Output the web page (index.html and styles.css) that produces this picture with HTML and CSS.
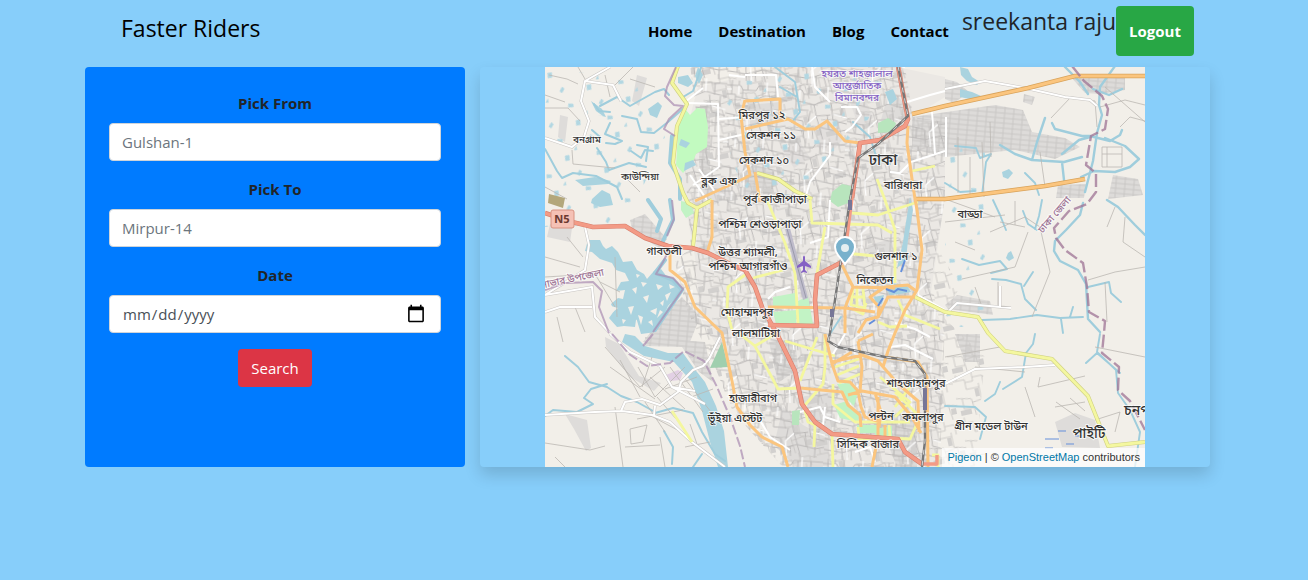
FILE: index.html
```html
<!DOCTYPE html>
<html lang="en">
<head>
<meta charset="utf-8">
<title>Faster Riders</title>
<link rel="stylesheet" href="styles.css">
</head>
<body>
<div class="container">
  <header class="navbar">
    <a class="brand" href="#">Faster Riders</a>
    <nav class="nav">
      <a class="nav-link" href="#">Home</a>
      <a class="nav-link" href="#">Destination</a>
      <a class="nav-link" href="#">Blog</a>
      <a class="nav-link" href="#">Contact</a>
      <span class="user">sreekanta raju</span>
      <button class="logout" type="button">Logout</button>
    </nav>
  </header>
  <main class="content">
    <form class="search-card">
      <div class="field"><label for="from">Pick From</label><input id="from" type="text" placeholder="Gulshan-1"></div>
      <div class="field"><label for="to">Pick To</label><input id="to" type="text" placeholder="Mirpur-14"></div>
      <div class="field"><label for="date">Date</label><input id="date" type="date"></div>
      <button class="search" type="button">Search</button>
    </form>
    <section class="map-card">
      <div class="map">
        <svg class="map-svg" viewBox="0 0 600 400" role="img" aria-label="Map of Dhaka">
          <defs>
            <pattern id="streets" width="61" height="53" patternUnits="userSpaceOnUse" patternTransform="rotate(4)">
              <path d="M0 5H14L16 9H29L32 4H61M0 14H9V25H22M9 16L27 19 30 30 44 28M5 0V14M16 9V17M21 0V9M12 5V0M27 19L40 13 61 17M36 4V14M49 4V16M44 16L47 33 61 36M0 33L17 36 19 53M0 44L18 46 34 41 38 53M30 30L34 41 52 44 61 42M52 35V53M9 34V45M24 25L22 38M41 28L43 42M27 43L28 53M55 17V27H47" fill="none" stroke="#b9b7b5" stroke-width=".9"/>
              <path d="M0 9H5M12 5V14M30 30L22 38 24 53M40 13V0M47 27L61 30" fill="none" stroke="#fff" stroke-width="1.2"/>
            </pattern>
            <pattern id="alleys" width="37" height="43" patternUnits="userSpaceOnUse" patternTransform="rotate(-12)">
              <path d="M0 6H12V16H25M4 6V0M12 9H20V0M25 12V27L37 30M0 23L15 26 17 43M15 30L28 28M6 24V35H16M28 28L30 43M30 6L37 8M20 5H30V15" fill="none" stroke="#c6c4c2" stroke-width=".8"/>
              <path d="M2 36h11v5H2zM20 17h4v8h-4zM30 32h5v6h-5z" fill="#d2d0ce"/>
            </pattern>
            <pattern id="dense" width="9" height="5" patternUnits="userSpaceOnUse" patternTransform="rotate(5)">
              <rect width="9" height="5" fill="#dddbd9"/><path d="M0 1H9M3 0V5" stroke="#cac8c6" stroke-width="1"/>
            </pattern>
            <pattern id="ponds" width="41" height="37" patternUnits="userSpaceOnUse" patternTransform="rotate(17)">
              <path d="M4 5l4-2 2 5-4 2zM22 14l3 1-1 5-3-1zM33 28l5-1 1 3-5 2zM12 29l2 4-3 1z" fill="#b2d7e2"/>
            </pattern>
          </defs>
          <rect width="600" height="400" fill="#f2efe9"/>

          <g fill="#dedcda">
            <path d="M153 20L197 10 240 0H352L400 10V30L368 50 400 60V130L385 232 398 260 392 400H245L190 310 155 250 150 190 132 96 145 50Z" fill="#ebe8e4"/>
            <path d="M15 48L23 50 20 75 13 70Z"/><path d="M5 157L27 161 25 175 2 170Z"/>
            <path d="M205 38L235 35 240 52 205 60Z"/><path d="M345 20L362 40 352 55 336 53Z"/>
            <path d="M92 8l10 3-8 28-7-5zM510 355l20-9 20 7 5 28-38-1z"/>
            <path d="M20 347l22 6 4 28-5 3-12-22zM60 270l14 7 20 32 22 7-7 8-24-14-24-30z"/>
            <path d="M255 330l32-5v45l-20-4zM238 340l20 18 26 14v28h-33l-22-22zM323 178l20-5 6 10-8 8-20-5z"/>
            <path d="M270 60l12-6 16 18-12 14-14-6zM305 35l15-4 8 20-14 10zM156 120l25-10 6 18-22 12zM235 80l20-5 10 16-16 10z" opacity=".7"/>
          </g>
          <path fill="url(#dense)" d="M367 50L450 38 478 43 487 65 520 71 535 80 510 92 470 83 400 90 367 82ZM525 9H580V23L555 27 540 26ZM400 12l12 3 12 10-15 11-9-4ZM479 27l11 3-3 8-9-3ZM155 38l10-5v90l-11-25ZM200 95l28 8 5 15-35 13ZM85 153l15-6 22 25-7 10-28-20ZM115 250L137 230 155 250 145 275 98 275 105 266ZM100 270l60 5 8 40-14-10-17-25-37-1ZM400 238l12-10 33 6 3 14-45-6ZM513 118l28-1-2 14h-28ZM568 108l25 4 5 16-35 4ZM410 267h25v28h-15ZM312 350l60-5v55h-20l-8-20-32-6ZM224 275l26-3 3 30-20 14Z"/>
          <path fill="url(#alleys)" d="M145 0H360L368 50 400 55V132L392 180 415 220 398 250 440 290 430 400H238L188 345 170 300 142 243 130 195 146 180 140 100 152 50Z"/>
          <path fill="url(#streets)" d="M145 0H360L368 50 400 55V132L385 220 400 250 395 400H238L188 345 170 300 142 243 130 195 146 180 140 100 152 50Z"/>
          <path fill="url(#ponds)" d="M195 5H350L310 75 260 130 200 130 170 40ZM0 5H90L120 70 80 160H0ZM400 80H440V260H400Z"/>

          <g fill="#b8e5bd">
            <path fill="#c2fac0" d="M134 50L141 43 145 48 152 41 160 42 163 60 162 80 151 87 148 95 138 106 131 98Z"/><path d="M333 56l10-5 8 5-3 9-15 1zM287 125l10-8 9 2 2 15-15 6-8-6z"/>
            <path d="M136 134l10 2 3 10-8 5-5-8zM228 230l22-4 2 14-24 2zM253 234l10-5 5 28-16 1zM228 245l24-2-1 13-20 1z" fill="#c2f3c5"/>
            <path fill="#a0cfae" d="M177 275l6 25-18 1z"/><path d="M292 317l12-1 9 9-4 14-10-10zM289 338l13-4 13 15-3 6-17-4zM312 358h20v8h-19zM330 362l17-3v11l-17-2z" fill="#c0f2c4"/><path d="M247 344l8-1-1 15h-7z"/>
            <path fill="#b3a77b" d="M4 127l16 4-2 10-15-5z"/><path fill="#e2d0e4" d="M121 308l12-5 5 3-3 7-10 1z"/>
          </g>

          <g fill="#aad3df">
            <path d="M43 173l12 0 3 6 3 3 6-3 6 6 5 10 9-1 5 9 7 4 3 5 7-8 7-2 6 8 11 5 2 5-9 2-3 10-5 1-3 9-5 2-2 7-8 7-5-7-4 2-1 7-11-1-7 1-8-9 5-7-3-7 7-6 5 1 2-9-9 1 5-9 8-1-4-8-9-3-4-7-12-4-8-7-7-1z"/>
            <path d="M110 207l18 4 10 11-15 17-12 26-15 2-6-20 11-24z"/>
            <path d="M103 42l10-7 4 4-5 12-7-3zM133 10l10-2 5 8-5 4-10-4zM47 132l10-9 8 4 3 11-13 2-9-4zM30 113l20-3 16 4-3 3-25 2zM136 72l9 4-4 5-7-3zM140 96l8-3 3 5-12 6zM46 34l5 10 7 5-5-1 8 2-4-8zM153 0l5 8-4 9-4-8z"/>
            <path d="M415 22l12 3 9 4-7 4-14-3zM415 0l8 2 4 8 8 5-3 3-10-4-6-6zM329 230l10-2-2 9-7-2zM341 222l6-6 15 3 4 6-11 2-10 1zM365 130l-4 25-3 20-6 26 9-8 2-20 5-30zM340 25l8-3 4 10-7 6zM463 186l3-2 3 7-5 3-3-3zM457 105l7-3 4 4-5 6-5-2z"/>
            <path d="M80 267l10 2 10 10 23 7 15 0 10 14 12 15 11 24 8 25 4 36h-10l-8-25-8-31-10-29-18-20-30-6-22-14z"/>
          </g>
          <path d="M111 217l7 2-5 4zM98 230l6-2-2 8zM120 228l6-3-4 9zM105 244l7-3-1 7zM83 240l6-1-3 9zM72 207l7-1-3 6zM93 248l5 2-2 8zM112 251l3-8 3 2zM66 239l7 2-5 4zM124 217l6 3-5 2zM96 215l6 1-4 4zM87 222l5-2-1 7zM115 236l4-3-1 6zM103 255l4-2 1 6zM77 252l4 1-3 4zM91 207l4 1-3 3z" fill="#f2efe9"/>
          <g fill="none" stroke="#9fcddc" stroke-linecap="round" stroke-linejoin="round">
            <path stroke-width="4" d="M127 69L125 96 135 112V132M103 133L116 152 112 164M125 133L128 153 117 176M120 193L110 206 128 213 137 223 110 263"/>
            <path stroke-width="2" d="M55 39L72 30 85 39 110 25 119 22 124 28M0 82L12 104 17 111 28 106 51 109 72 120 77 132M52 81L61 95 64 103 84 96 101 100M77 49L92 52 96 65 109 66 123 55 140 40M65 45L54 44 49 37M61 76L70 77 77 74 60 67 65 56M55 70L47 63M86 84L96 91 100 83 108 84M92 78L103 80 101 94M20 289L33 300 44 315 62 320 76 329 92 335 110 345M0 349L8 343 32 345 48 337 39 331 46 322 62 317M110 346L128 341 148 346 157 365 170 387 180 394M148 400L157 387M119 364L128 380 127 397M156 0L153 10 148 24 138 30"/>
            <path stroke-width="2.4" d="M455 78L470 87 487 93 519 95 537 90M487 93L492 75 500 51M507 56L510 62 537 69 545 69M570 -1L555 20 554 38 557 48 552 66 548 94 540 125M545 69L565 74 575 68 577 63M560 71L580 79 594 92 585 100 570 105 549 104 536 110M517 95L519 113M517 87L534 73 545 70M520 0L535 15 543 27M548 22L564 28 577 22M562 133L573 140 590 158 600 168M538 136L535 148 521 163 510 174 509 184 515 194 533 203 541 217 543 252 555 265"/>
            <path stroke-width="1.9" d="M448 133L455 148 461 163M478 144L483 157 492 163M497 133L494 149 490 162M417 192L434 198 455 194 462 202 446 206M447 212L461 213 476 217 480 232 491 243M479 219L488 205M543 220L564 215 566 226 576 235M437 253L465 252 492 248 515 251 538 250M528 240L525 250M516 252L518 266M410 79L431 81 435 91 446 87 441 95 437 128M480 106L490 116 494 128M400 116L415 125 430 124M555 267L552 285 571 303 573 326 585 343 595 365 590 400M400 339L430 340 441 350 435 372M455 315L450 327 440 334M490 267L488 277 481 286 477 310 458 322M541 296L552 286 575 306M230 0L250 15 255 45 247 55M235 20L252 30M285 267L296 250M308 55L325 70 332 92 345 97"/>
          </g>
          <g fill="none" stroke="#bbb7b3" stroke-width=".8">
            <path d="M4 8L22 12 33 17M0 28L20 35M33 0L40 12M68 20L88 0M27 83L28 97 70 101M0 41H23L35 54M0 210L50 207 70 240M0 376L45 383 60 379M70 340L78 400M85 362L102 358 98 375 86 377ZM93 345L108 350 140 367M145 357L153 380M93 300L110 330 140 300M105 310L140 342M120 322L152 310M60 280L95 320 120 300M92 352L138 343M107 290L97 320M125 300L158 345M65 300L110 332M75 293L95 330M445 55L446 90M413 70V126M425 90V130M437 75L439 130M495 85L500 120M506 51L526 30 550 34 552 60M555 40L580 33 600 38M575 60L585 50 600 54M557 80H577V100H557ZM562 80V100M557 87H577M445 165L480 150 495 160 505 205 487 250M483 165L470 200 417 212M453 215V240M430 220L437 240M410 175L430 183M470 134V158M455 155L480 160M400 132L450 150M400 155L460 148M543 213L570 205 600 200M560 215L562 255M550 280L600 290M480 320L490 350M493 320L540 309M495 310L493 320M400 290L455 280M430 300L480 305M510 340L540 335M511 335L535 352M525 331L540 344M550 353L575 345 570 365M410 390L440 387M580 150L578 175 600 190M562 160L570 140M560 20L600 55"/>
            <path d="M22 170L38 190M0 190L35 200M70 190L72 250M30 240L40 265M12 250L18 275M55 215L75 225M0 120L22 132M80 110L95 125M10 390L20 400M115 370L120 400M140 380L165 375M80 380L115 378M100 335L120 365M112 330L138 360M140 312L170 350M146 330L168 322M85 12L110 20M60 8L65 30"/>
          </g>
          <path fill="none" stroke="#c9c6c3" stroke-width="3" d="M65 0L40 14 36 34 44 54 39 70 27 80 0 71M40 14L68 18 76 34M40 160L44 178 40 203 0 228M0 228L47 220 50 250 65 266M0 245L15 240 47 240M65 267L85 285 115 299 127 320 160 337M0 348L33 346 50 345 77 344 107 348 125 355 147 375 180 400M76 344L80 335 97 332 115 338 133 325 136 315 148 303 158 299 164 292 175 270M109 348L110 339M127 320L150 324M400 22L440 14 480 21 520 30 545 33 552 39M400 248L412 236 466 241M455 219V240M400 317L430 302 480 300 510 298"/>
          <path fill="none" stroke="#fff" stroke-width="2" stroke-linejoin="round" d="M65 0L40 14 36 34 44 54 39 70 27 80 0 71M40 14L68 18 76 34M40 160L44 178 40 203 0 228M0 228L47 220 50 250 65 266M0 245L15 240 47 240M65 267L85 285 115 299 127 320 160 337M0 348L33 346 50 345 77 344 107 348 125 355 147 375 180 400M76 344L80 335 97 332 115 338 133 325 136 315 148 303 158 299 164 292 175 270M109 348L110 339M127 320L150 324M400 22L440 14 480 21 520 30 545 33 552 39M400 248L412 236 466 241M455 219V240M400 317L430 302 480 300 510 298M140 35L158 21M143 36L173 37 174 100M174 52L200 50M174 73L200 67M174 100L148 118M154 102L170 125M145 108L162 133M184 8L200 10M233 30L231 8 200 8M267 0L270 20 285 35M296 40L312 40 316 48 307 60 300 65M285 75L285 88 265 115 260 132M362 35L385 28 400 24M387 45L390 87M401 50V90M345 105L355 106 366 95 400 84M285 133L283 170 265 176M223 232L230 225 245 220M373 228L400 243M350 256L370 262 385 270M300 267L285 292M345 280L360 278 388 292M255 345L275 340 280 350 295 355M280 340L278 358M213 350L225 370 245 383M310 385L325 380 330 395"/>

          <g fill="none" stroke-linejoin="round">
            <path stroke="#cfd082" stroke-width="4" d="M133 -1L127 16 142 37 132 59 128 96 138 126 143 136 152 141 148 180M152 141L167 133M212 106L233 112 250 124 267 132M370 230L400 245 433 250 443 266 460 284 507 292 543 329 563 379 600 375"/>
            <path stroke="#f4f79f" stroke-width="2.8" d="M133 -1L127 16 142 37 132 59 128 96 138 126 143 136 152 141 148 180M152 141L167 133M212 106L233 112 250 124 267 132M265 133L267 156 333 158 347 166M222 133L240 176 250 206 253 256M307 146L333 148 373 135M340 133L350 163V216M280 160L272 206M300 186L330 189M332 112L340 133M370 230L400 245 433 250 443 266 460 284 507 292 543 329 563 379 600 375M200 208L183 220 182 243 187 263M208 211L238 203M367 104L390 99M210 279L233 322 255 321M195 267L210 279 230 267M272 270L255 314M240 274L290 289M280 267V300L278 317 260 338M290 300L314 292M292 308L314 299M294 316L315 307M288 317V337L310 355H365M260 344L263 355 270 358 269 380M287 367L288 400M308 222L306 238 320 241 318 222M312 221V238M307 230H320M308 242L318 247 321 236M353 233L360 248 395 262M333 255L345 260 362 259M335 310L365 335 350 350M350 325L375 350 365 372 345 371M365 320L350 340M313 360L314 372 345 370 344 358M387 388H393V400M127 344L147 375"/>
            <path stroke="#d9a35b" stroke-width="4.600" d="M367 47L400 39 483 21 530 9H600M370 132L400 132 500 119 540 112"/>
            <path stroke="#fbc57e" stroke-width="3" d="M200 34L235 32V51M200 62L243 52 260 62H270L282 54 300 74 315 76M367 47L400 39 483 21 530 9H600M363 59L362 76 367 112 370 132 372 143 377 183 372 223 360 243 350 266 343 284 338 300M370 132L400 132 500 119 540 112M200 33L196 49 200 85 205 108 200 111 150 134M167 133V170L162 186M210 105L215 135M125 183V203L140 215 150 240 177 266 187 314 192 340 205 358 217 370 237 380 243 400M223 240L300 241 330 245M297 198L308 220 300 241V266M308 220L350 221M313 266L321 253 333 250 343 230 370 230M333 250L334 240 325 230 340 220 363 218 371 224M280 267L287 297 293 314 305 315 313 324 316 340 320 350 335 355M255 321L297 325 303 338 315 348 316 360M303 328L317 324 350 330 367 350 376 366M287 295L317 288 333 294 353 317 373 334 374 365M313 274L317 300 315 325M313 274L328 267M340 290L373 295 382 310 383 400M333 330V370L327 400M287 297L307 285M330 326L336 345 334 360M340 370V358"/>
            <path stroke="#d87f6d" stroke-width="4.600" d="M0 146L27 155 48 160 80 159 100 171 123 179 147 181 163 186 187 198 200 203 210 220 217 240 232 267 250 304 257 337 270 355 287 367 353 372 360 385 377 397M223 258L272 259 270 233 272 208 297 195M307 131L315 76 335 73 360 59 363 52 358 26 353 -1"/>
            <path stroke="#f39b86" stroke-width="3.400" d="M0 146L27 155 48 160 80 159 100 171 123 179 147 181 163 186 187 198 200 203 210 220 217 240 232 267 250 304 257 337 270 355 287 367 353 372 360 385 377 397H392V388M223 258L272 259 270 233 272 208 297 195M300 185L307 131 315 76 335 73 360 59 363 52 358 26 353 -1"/>
            <path stroke="#777" stroke-width="2.400" d="M353 -1L363 49 333 77 313 91 305 133 295 200 285 266 283 274 293 280 340 290 370 294 380 307V374L377 400"/>
            <path stroke="#d7d7d7" stroke-width="1" stroke-dasharray="5 6" d="M353 -1L363 49 333 77 313 91 305 133 295 200 285 266 283 274 293 280 340 290 370 294 380 307V374L377 400"/>
            <path stroke="#a98bb0" stroke-width="2" stroke-opacity=".7" d="M131 0L122 20 120 29 129 38 138 39 124 52 119 62 130 69M127 133L129 152 122 169M123 185L118 195 111 207 128 211 138 222 126 239 108 265M0 223L20 216 48 215 57 224 54 240 64 266M98 279L108 267"/>
            <path stroke="#a98bb0" stroke-width="2" stroke-opacity=".7" stroke-dasharray="10 3" d="M67 267L84 287 102 299 125 296 139 284 159 294 172 320 185 350 195 379 200 400"/>
            <path stroke="#9d7394" stroke-opacity=".75" stroke-width="2.400" stroke-dasharray="13 4" d="M527 -1L539 14 557 29 563 42 560 62 546 69 541 98 551 106 551 125 542 137 524 144 509 161 511 171 520 183 538 196 542 220 544 245 560 254 559 266 557 286 574 300 573 323 585 334 600 363"/>
          </g>
          <path d="M239 156l6 5 18 70-5 2z" fill="#bfbccb"/><path d="M241 158l20 73" stroke="#9a9aab"/>
          <path d="M258 190v4l-6 5v2l6-2v4l-2 2v1l3-1 3 1v-1l-2-2v-4l6 2v-2l-6-5v-4q-1-3-2 0z" fill="#8461c4"/>
          <g stroke="#648fdb" stroke-width="2"><path d="M341 222l8 3 4-3 9 2M356 205l4-12M324 257l6-4M338 231l-5 8" fill="none"/><path d="M500 372h14M513 364h8M521 377h8M530 369h7M500 381h8" stroke-width="1"/></g>
          <path d="M378 321h4v22h-4zM285 242h4v8h-4zM303 133h4v10h-4z" fill="#777697"/>
          <path d="M8 143h19q2 0 2 2v14q0 2-2 2H8q-2 0-2-2v-14q0-2 2-2z" fill="#f5c1b5" stroke="#d89281"/>
          <g class="place">
            <text x="17" y="156" class="ref">N5</text>
            <g class="airport"><text x="312" y="10">হযরত শাহজালাল</text><text x="312" y="22">আন্তর্জাতিক</text><text x="312" y="34">বিমানবন্দর</text></g>
            <text x="217" y="52">মিরপুর ১২</text><text x="226" y="72">সেকশন ১১</text><text x="219" y="97">সেকশন ১০</text>
            <text x="42" y="76" class="small">বনগ্রাম</text><text x="95" y="113" class="small">কাউন্দিয়া</text><text x="174" y="118">ব্লক এফ</text>
            <text x="338" y="98" class="city">ঢাকা</text><text x="358" y="122">বারিধারা</text><text x="230" y="136">পূর্ব কাজীপাড়া</text>
            <text x="425" y="151">বাড্ডা</text><text x="215" y="161">পশ্চিম শেওড়াপাড়া</text><text x="119" y="188">গাবতলী</text>
            <text x="203" y="189">উত্তর শ্যামলী,</text><text x="203" y="203">পশ্চিম আগারগাঁও</text><text x="351" y="193">গুলশান ১</text><text x="330" y="217">নিকেতন</text>
            <text x="202" y="249">মোহাম্মদপুর</text><text x="211" y="270">লালমাটিয়া</text><text x="371" y="320">শাহজাহানপুর</text>
            <text x="208" y="335">হাজারীবাগ</text><text x="190" y="355">ভূঁইয়া এস্টেট</text><text x="336" y="353">পল্টন</text><text x="378" y="354">কমলাপুর</text>
            <text x="323" y="381">সিদ্দিক বাজার</text><text x="446" y="363">গ্রীন মডেল টাউন</text><text x="544" y="371" class="town">পাইটি</text><text x="601" y="348" class="town">চনপাড়া</text>
            <text class="district" transform="translate(512 150) rotate(-49)">ঢাকা জেলা</text><text class="district" transform="translate(28 215) rotate(-12)">সাভার উপজেলা</text>
          </g>
          <path d="M300 197L293 188Q290 184 290 180A10 10 0 0 1 310 180Q310 184 307 188Z" fill="#78b1cc" stroke="#fff" stroke-width="2"/><circle cx="300" cy="181" r="4" fill="#e5eff0"/>
        </svg>
        <div class="attribution"><a href="#">Pigeon</a> | © <a href="#">OpenStreetMap</a> contributors</div>
      </div>
    </section>
  </main>
</div>
</body>
</html>
```
FILE: styles.css
```css
* { box-sizing: border-box; }
body {
  min-height: 100vh;
  margin: 0;
  padding: 0 13px 0 0;
  background: #87cefa;
  color: #212529;
  font: 16px/24px "Segoe UI", "Open Sans", "Noto Sans", sans-serif;
}
a { text-decoration: none; }
button, input { font: inherit; }
.container { max-width: 1125px; margin: 0 auto; }
.navbar {
  display: flex;
  justify-content: space-between;
  align-items: flex-start;
  padding: 6px 16px 11px 36px;
}
.brand { color: #000; font-size: 23px; font-weight: 500; line-height: 44px; }
.nav { display: flex; align-items: flex-start; }
.nav-link { padding: 13px; color: #000; font-size: 15px; font-weight: 700; }
.user { font-size: 23px; font-weight: 500; line-height: 30px; }
.logout {
  padding: 13px;
  border: 0;
  border-radius: 4px;
  background: #28a745;
  color: #fff;
  font-size: 15px;
  font-weight: 700;
}
.content { display: grid; grid-template-columns: 380fr 730fr; gap: 15px; }
.search-card {
  min-height: 400px;
  padding: 24px;
  border-radius: 4px;
  background: #007bff;
  text-align: center;
}
.field { margin-bottom: 16px; }
.field label { display: block; margin-bottom: 8px; font-size: 15px; font-weight: 700; }
.field input {
  display: block;
  width: 100%;
  height: 38px;
  padding: 6px 12px;
  border: 1px solid #ced4da;
  border-radius: 4px;
  background: #fff;
  color: #495057;
  font-size: 15px;
}
.field input::placeholder { color: #6c757d; opacity: 1; }
.field input::-webkit-calendar-picker-indicator { width: 20px; height: 20px; }
.search {
  height: 38px;
  padding: 6px 13px;
  border: 0;
  border-radius: 4px;
  background: #dc3545;
  color: #fff;
  font-size: 15px;
}
.map-card {
  border-radius: 4px;
  box-shadow: 0 8px 16px rgba(0, 0, 0, .15);
}
.map { position: relative; max-width: 600px; margin: 0 auto; }
.map-svg { display: block; width: 100%; }
.attribution {
  position: absolute;
  right: 0;
  bottom: 0;
  padding: 3px 5px;
  background: rgba(255, 255, 255, .7);
  color: #333;
  font: 11px/13px "Liberation Sans", Arial, sans-serif;
}
.attribution a { color: #0078a8; }
.place {
  fill: #333;
  stroke: rgba(255, 255, 255, .7);
  stroke-width: 2px;
  paint-order: stroke;
  font: 500 11px "Noto Sans Bengali", "Noto Sans", sans-serif;
  text-anchor: middle;
}
.place .small { font-size: 10px; }
.place .city { font-size: 15px; }
.place .town { font-size: 14px; }
.place .airport { fill: #8461c4; font-size: 10px; }
.place .district { fill: #9d7394; font-size: 10px; }
.place .ref { fill: #6d3b32; font-size: 11px; font-weight: 700; stroke: none; }
```
